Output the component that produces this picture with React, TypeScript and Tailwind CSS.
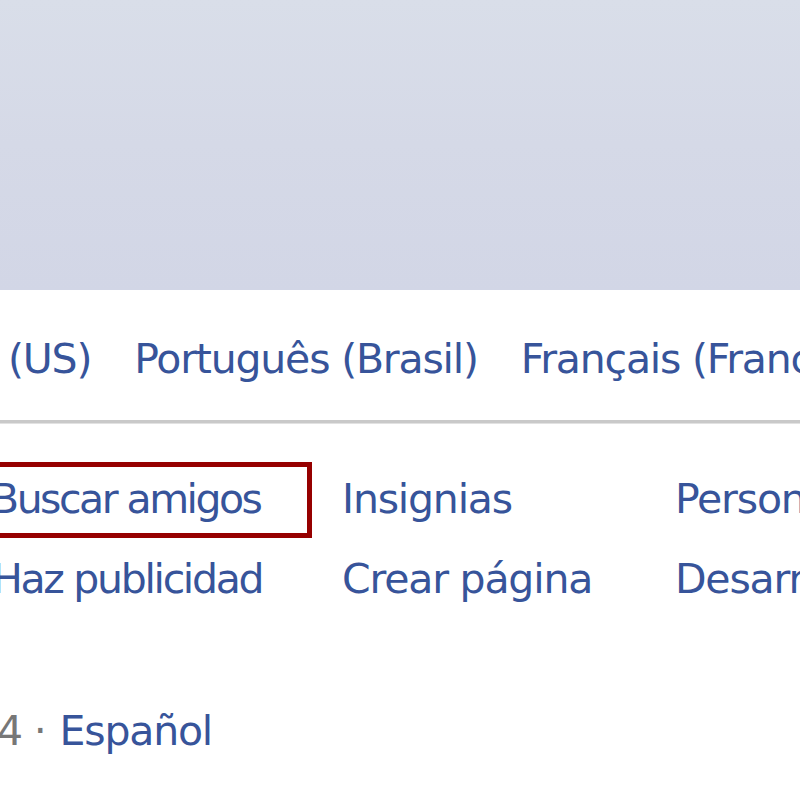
const font = { fontFamily: '"DejaVu Sans", Verdana, sans-serif' };

const Link = ({ children, className = "" }: { children: React.ReactNode; className?: string }) => (
  <a href="#" className={`block whitespace-nowrap text-[#37549a] leading-[48px] ${className}`}>
    {children}
  </a>
);

export default function App() {
  return (
    <div className="w-[800px] h-[800px] overflow-hidden bg-white text-[41px] tracking-[-1.2px]" style={font}>
      {/* top panel */}
      <div className="h-[290px] bg-gradient-to-b from-[#d9dee9] via-[#d5d9e7] to-[#d2d6e6]" />

      {/* languages */}
      <div className="pt-[45px] pb-[37px] flex gap-[43px] pl-[8px]">
        <Link>(US)</Link>
        <Link>Português (Brasil)</Link>
        <Link>Français (France)</Link>
      </div>
      <div className="h-[4px] bg-[#c9c9c9] border-b border-[#e2e2e2]" />

      {/* footer links */}
      <div className="mt-[38px] flex">
        <div className="-ml-[30px] w-[342px] h-[76px] border-[5px] border-[#960000] pl-[16px] pt-[8px] shrink-0">
          <Link className="tracking-[-2.5px]">Buscar amigos</Link>
        </div>
        <div className="ml-[30px] w-[333px] pt-[13px] shrink-0">
          <Link>Insignias</Link>
        </div>
        <div className="pt-[13px] shrink-0">
          <Link>Personas</Link>
        </div>
      </div>
      <div className="mt-[17px] flex">
        <div className="-ml-[8px] w-[350px] shrink-0">
          <Link className="tracking-[-2.3px]">Haz publicidad</Link>
        </div>
        <div className="w-[333px] shrink-0">
          <Link>Crear página</Link>
        </div>
        <div className="shrink-0">
          <Link>Desarrolladores</Link>
        </div>
      </div>

      {/* bottom line */}
      <div className="mt-[104px] flex items-baseline leading-[48px] -ml-[3px] whitespace-nowrap">
        <span className="text-[#777777]">4 · </span>
        <a href="#" className="text-[#37549a] ml-[14px]">Español</a>
      </div>
    </div>
  );
}
